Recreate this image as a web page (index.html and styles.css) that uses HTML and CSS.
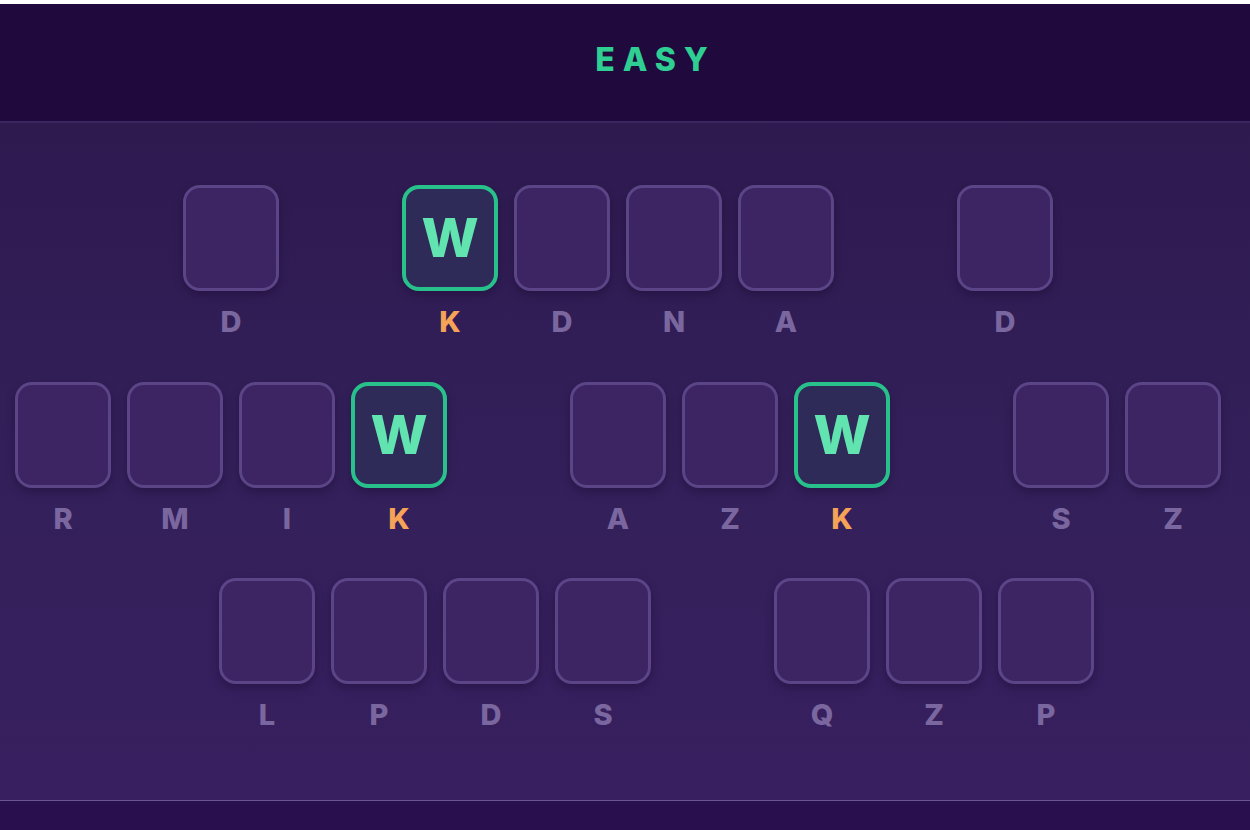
FILE: index.html
```html
<!DOCTYPE html>
<html lang="en">
<head>
<meta charset="utf-8">
<title>Easy puzzle</title>
<link rel="stylesheet" href="styles.css">
</head>
<body>
<div class="topstrip"></div>
<header class="header">
  <h1 class="level">EASY</h1>
</header>
<main class="board">
  <div class="row row-1">
    <div class="word">
      <div class="slot"><div class="tile"></div><span class="hint">D</span></div>
    </div>
    <div class="word">
      <div class="slot"><div class="tile tile-on">W</div><span class="hint hint-on">K</span></div>
      <div class="slot"><div class="tile"></div><span class="hint">D</span></div>
      <div class="slot"><div class="tile"></div><span class="hint">N</span></div>
      <div class="slot"><div class="tile"></div><span class="hint">A</span></div>
    </div>
    <div class="word">
      <div class="slot"><div class="tile"></div><span class="hint">D</span></div>
    </div>
  </div>
  <div class="row row-2">
    <div class="word">
      <div class="slot"><div class="tile"></div><span class="hint">R</span></div>
      <div class="slot"><div class="tile"></div><span class="hint">M</span></div>
      <div class="slot"><div class="tile"></div><span class="hint">I</span></div>
      <div class="slot"><div class="tile tile-on">W</div><span class="hint hint-on">K</span></div>
    </div>
    <div class="word">
      <div class="slot"><div class="tile"></div><span class="hint">A</span></div>
      <div class="slot"><div class="tile"></div><span class="hint">Z</span></div>
      <div class="slot"><div class="tile tile-on">W</div><span class="hint hint-on">K</span></div>
    </div>
    <div class="word">
      <div class="slot"><div class="tile"></div><span class="hint">S</span></div>
      <div class="slot"><div class="tile"></div><span class="hint">Z</span></div>
    </div>
  </div>
  <div class="row row-3">
    <div class="word">
      <div class="slot"><div class="tile"></div><span class="hint">L</span></div>
      <div class="slot"><div class="tile"></div><span class="hint">P</span></div>
      <div class="slot"><div class="tile"></div><span class="hint">D</span></div>
      <div class="slot"><div class="tile"></div><span class="hint">S</span></div>
    </div>
    <div class="word">
      <div class="slot"><div class="tile"></div><span class="hint">Q</span></div>
      <div class="slot"><div class="tile"></div><span class="hint">Z</span></div>
      <div class="slot"><div class="tile"></div><span class="hint">P</span></div>
    </div>
  </div>
</main>
<footer class="footer"></footer>
</body>
</html>
```

FILE: styles.css
```css
* { box-sizing: border-box; }

html, body {
  margin: 0;
  padding: 0;
  width: 1250px;
  height: 830px;
  overflow: hidden;
  background: #2a0f4e;
  font-family: Inter, "Noto Sans", "Liberation Sans", sans-serif;
}

.topstrip {
  height: 4px;
  background: #ffffff;
}

.header {
  height: 119px;
  background: #200a3d;
  border-bottom: 2px solid #3b2660;
  display: flex;
  align-items: center;
  justify-content: center;
  padding-left: 61px;
  padding-bottom: 6px;
}

.level {
  margin: 0;
  font-size: 32px;
  font-weight: 800;
  letter-spacing: 8px;
  color: #2fcf93;
  line-height: 1;
}

.board {
  height: 678px;
  background: linear-gradient(180deg, #2e1a4f 0%, #33205a 50%, #381f5f 100%);
  border-bottom: 1px solid #6a5592;
  padding-top: 62px;
  display: flex;
  flex-direction: column;
  gap: 44.5px;
}

.row {
  display: flex;
  gap: 123px;
}

.row-1 { padding-left: 183px; }
.row-2 { padding-left: 15px; }
.row-3 { padding-left: 219px; }

.word {
  display: flex;
  gap: 16px;
}

.slot {
  width: 96px;
  display: flex;
  flex-direction: column;
  align-items: center;
  gap: 16px;
}

.tile {
  width: 96px;
  height: 106px;
  border-radius: 17px;
  border: 3px solid #5b4586;
  background: #3c2562;
  box-shadow: 0 4px 8px rgba(20, 5, 40, 0.35);
  display: flex;
  align-items: center;
  justify-content: center;
  font-size: 54px;
  font-weight: 800;
  color: #62e4b0;
  line-height: 1;
}

.tile-on {
  border: 4px solid #28c18b;
  background: #2f2b59;
}

.hint {
  height: 30px;
  line-height: 30px;
  font-size: 29px;
  font-weight: 800;
  color: #7b679f;
}

.hint-on {
  color: #f6a257;
}

.footer {
  height: 30px;
  background: #2a0f4e;
}
```
